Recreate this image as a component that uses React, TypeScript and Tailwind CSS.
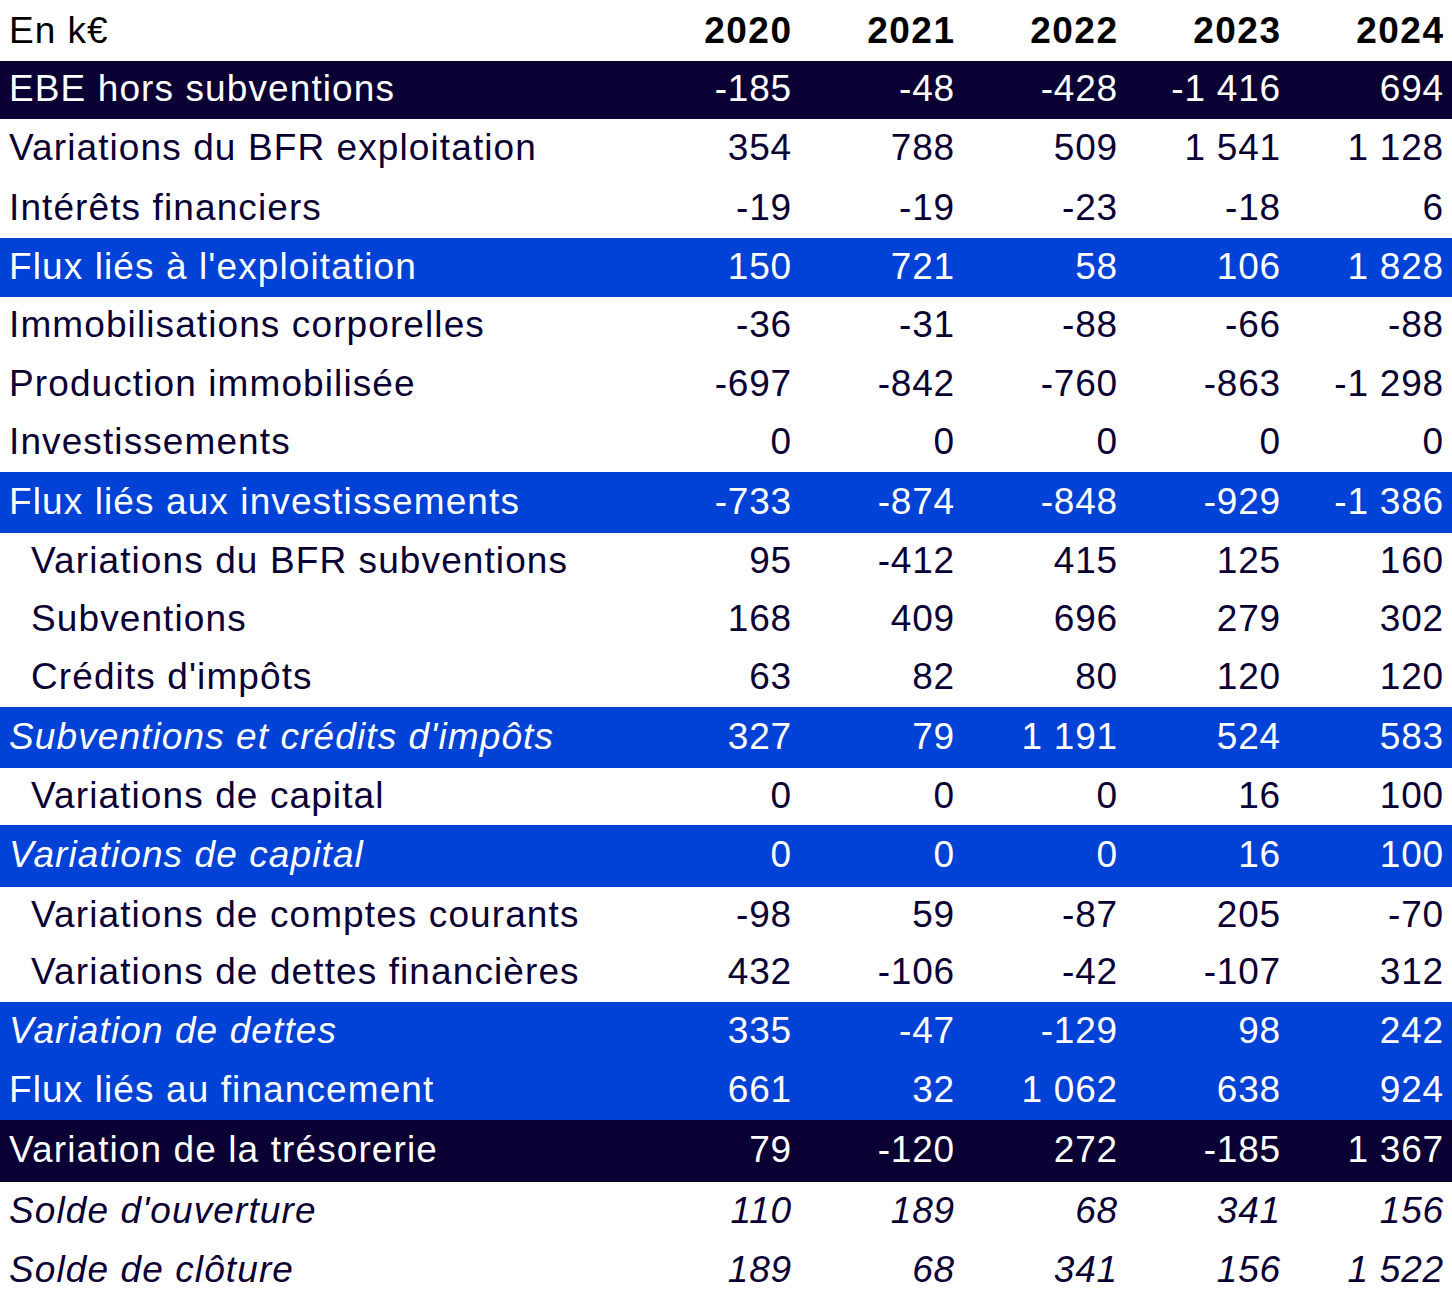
import React from "react";

type Row = {
  label: string;
  values: string[];
  h: number;
  kind: "dark" | "blue" | "plain";
  indent?: boolean;
  italicLabel?: boolean;
  italicValues?: boolean;
};

const rows: Row[] = [
  { label: "EBE hors subventions", values: ["-185", "-48", "-428", "-1 416", "694"], h: 58, kind: "dark" },
  { label: "Variations du BFR exploitation", values: ["354", "788", "509", "1 541", "1 128"], h: 60, kind: "plain" },
  { label: "Intérêts financiers", values: ["-19", "-19", "-23", "-18", "6"], h: 59, kind: "plain" },
  { label: "Flux liés à l'exploitation", values: ["150", "721", "58", "106", "1 828"], h: 59, kind: "blue" },
  { label: "Immobilisations corporelles", values: ["-36", "-31", "-88", "-66", "-88"], h: 58, kind: "plain" },
  { label: "Production immobilisée", values: ["-697", "-842", "-760", "-863", "-1 298"], h: 59, kind: "plain" },
  { label: "Investissements", values: ["0", "0", "0", "0", "0"], h: 58, kind: "plain" },
  { label: "Flux liés aux investissements", values: ["-733", "-874", "-848", "-929", "-1 386"], h: 61, kind: "blue" },
  { label: "Variations du BFR subventions", values: ["95", "-412", "415", "125", "160"], h: 58, kind: "plain", indent: true },
  { label: "Subventions", values: ["168", "409", "696", "279", "302"], h: 58, kind: "plain", indent: true },
  { label: "Crédits d'impôts", values: ["63", "82", "80", "120", "120"], h: 58, kind: "plain", indent: true },
  { label: "Subventions et crédits d'impôts", values: ["327", "79", "1 191", "524", "583"], h: 61, kind: "blue", italicLabel: true },
  { label: "Variations de capital", values: ["0", "0", "0", "16", "100"], h: 57, kind: "plain", indent: true },
  { label: "Variations de capital", values: ["0", "0", "0", "16", "100"], h: 62, kind: "blue", italicLabel: true },
  { label: "Variations de comptes courants", values: ["-98", "59", "-87", "205", "-70"], h: 57, kind: "plain", indent: true },
  { label: "Variations de dettes financières", values: ["432", "-106", "-42", "-107", "312"], h: 58, kind: "plain", indent: true },
  { label: "Variation de dettes", values: ["335", "-47", "-129", "98", "242"], h: 59, kind: "blue", italicLabel: true },
  { label: "Flux liés au financement", values: ["661", "32", "1 062", "638", "924"], h: 59, kind: "blue" },
  { label: "Variation de la trésorerie", values: ["79", "-120", "272", "-185", "1 367"], h: 62, kind: "dark" },
  { label: "Solde d'ouverture", values: ["110", "189", "68", "341", "156"], h: 59, kind: "plain", italicLabel: true, italicValues: true },
  { label: "Solde de clôture", values: ["189", "68", "341", "156", "1 522"], h: 59, kind: "plain", italicLabel: true, italicValues: true },
];

const years = ["2020", "2021", "2022", "2023", "2024"];

export default function App() {
  return (
    <div
      className="w-[1452px] bg-white text-[37px] leading-none"
      style={{ fontFamily: '"Liberation Sans", Arial, sans-serif' }}
    >
      <div className="flex h-[61px] items-center text-black">
        <div className="w-[637px] pl-[9px] tracking-[1px]">En k€</div>
        {years.map((y) => (
          <div key={y} className="w-[163px] pr-[7.5px] text-right font-bold tracking-[1.5px]">
            {y}
          </div>
        ))}
      </div>
      {rows.map((r, i) => {
        const bg =
          r.kind === "dark"
            ? "bg-[#0a0033] text-white"
            : r.kind === "blue"
            ? "bg-[#0041d6] text-white"
            : "bg-white text-[#0a0033]";
        return (
          <div
            key={i}
            className={`flex items-center pb-[3px] ${bg}`}
            style={{ height: r.h }}
          >
            <div
              className={`w-[637px] whitespace-nowrap tracking-[1.1px] ${r.indent ? "pl-[31px]" : "pl-[9px]"} ${
                r.italicLabel ? "italic" : ""
              }`}
            >
              {r.label}
            </div>
            {r.values.map((v, j) => (
              <div
                key={j}
                className={`w-[163px] pr-[8px] text-right whitespace-nowrap tracking-[0.8px] ${r.italicValues ? "italic" : ""}`}
              >
                {v}
              </div>
            ))}
          </div>
        );
      })}
    </div>
  );
}
